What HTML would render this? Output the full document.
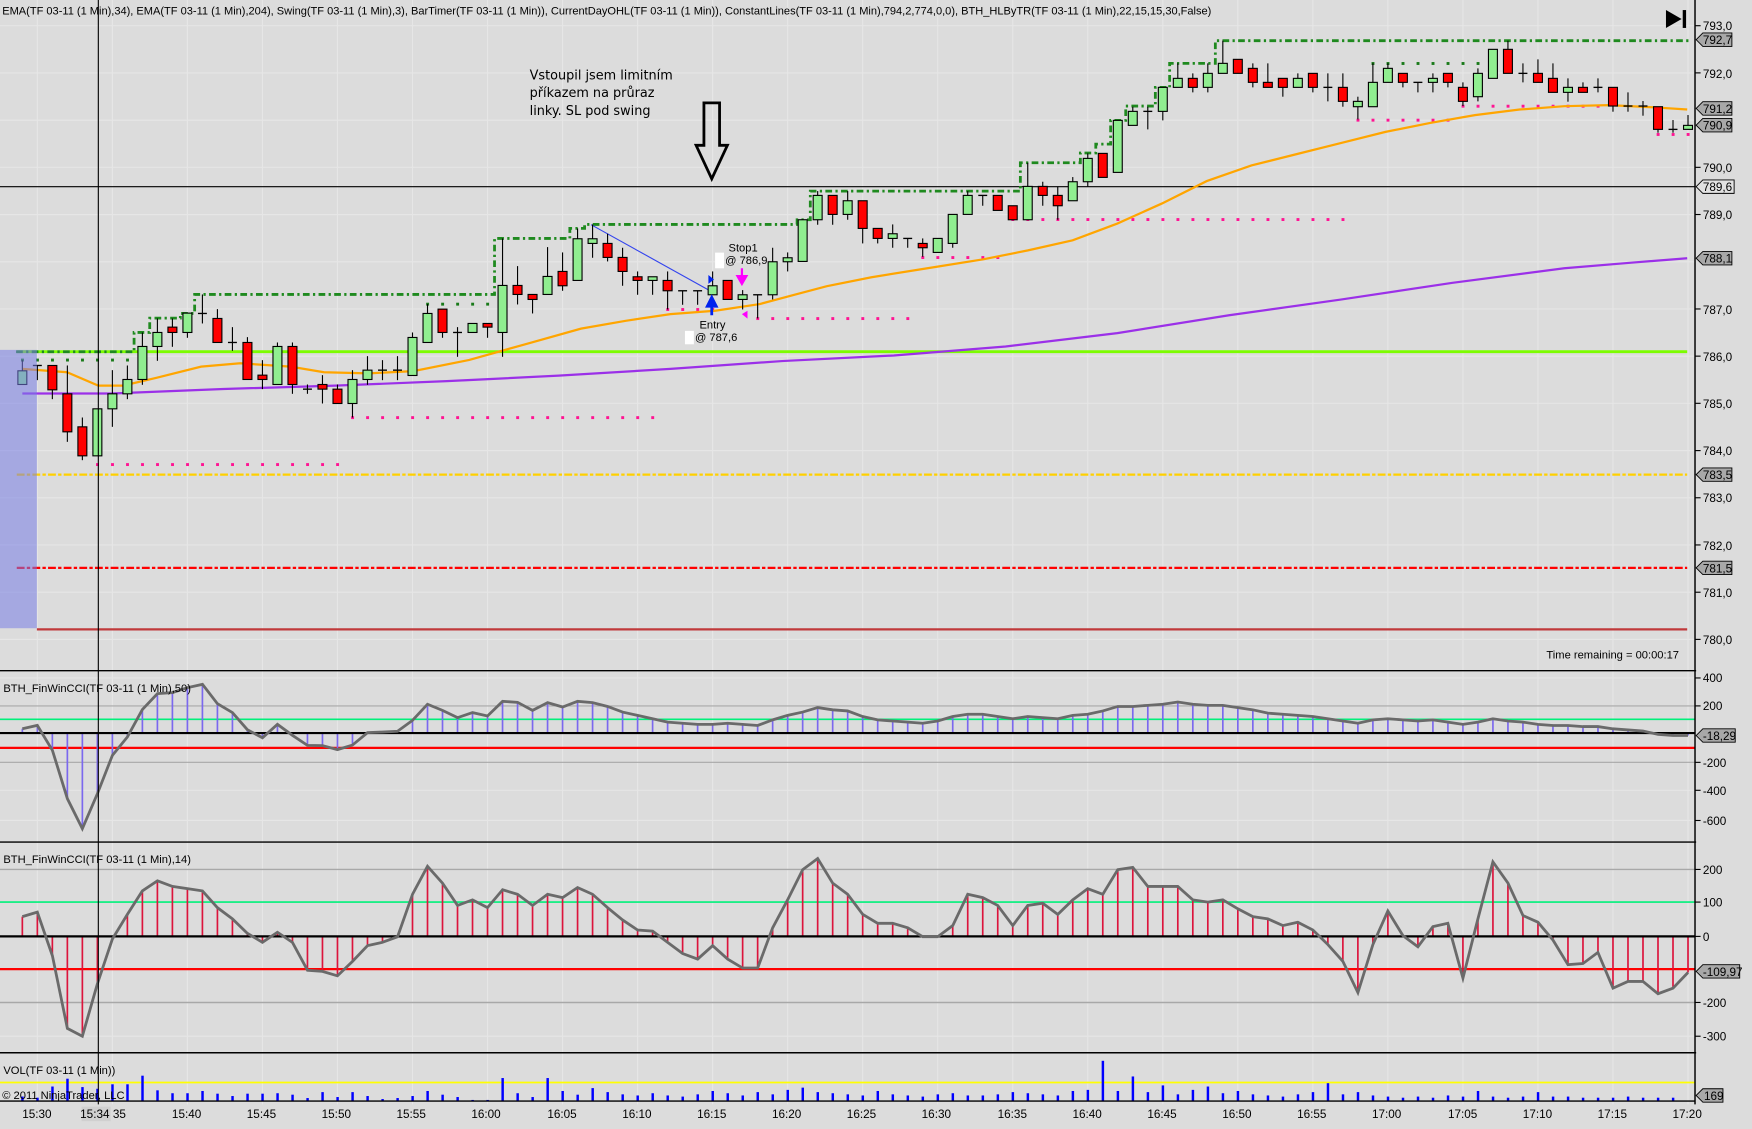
<!DOCTYPE html>
<html><head><meta charset="utf-8">
<style>
html,body{margin:0;padding:0;background:#dcdcdc;overflow:hidden}
svg{display:block}
text{font-family:"Liberation Sans",sans-serif;fill:#000}
</style></head>
<body>
<svg id="s" width="1752" height="1129" viewBox="0 0 1568 1010" preserveAspectRatio="none" xmlns="http://www.w3.org/2000/svg">
<rect x="0" y="0" width="1568" height="1010" fill="#dcdcdc"/>
<g id="grid" stroke="#e6e6e6" stroke-width="1"></g>
<line x1="33" y1="563" x2="1510" y2="563" stroke="#c0393b" stroke-width="2"/>
<line x1="15" y1="508" x2="1510" y2="508" stroke="#ff0000" stroke-width="2" stroke-dasharray="7,2,3,2"/>
<line x1="15" y1="424.6" x2="1510" y2="424.6" stroke="#ffd000" stroke-width="2" stroke-dasharray="7,2,3,2"/>
<line x1="0" y1="167" x2="1517" y2="167" stroke="#000" stroke-width="1"/>
<line x1="15" y1="314.6" x2="1510" y2="314.6" stroke="#7cfc00" stroke-width="2.5"/>
<g id="dots"></g>
<path d="M14.4,314.7 H120 V297.4 H134 V284.6 H161.4 V280.4 H174.2 V263.4 H442.6 V213.3 H510 V204.3 H523.2 V200.8 H713.4 V196.6 H725.2 V171 H913.2 V145.6 H966.9 V136.9 H980.7 V128.9 H994 V107.7 H1007.5 V94.9 H1034 V78.2 H1046.8 V56.7 H1087.7 V36.4 H1512" fill="none" stroke="#1f8a1f" stroke-width="2.5" stroke-dasharray="6,3,2,3"/>
<polyline fill="none" stroke="#9b30e8" stroke-width="2" points="20,352 100,352 200,348 300,345 400,341 500,336 600,330 700,323 800,318 900,310 1000,298 1100,282 1200,268 1300,253 1400,240 1460,235 1510,231"/>
<polyline fill="none" stroke="#ffa500" stroke-width="2" points="20,330 60,333 88,345 110,345 140,338 180,328 215,325 260,328 290,333 330,334 370,332 420,322 470,308 520,294 560,287 600,281 640,278 680,272 710,264 740,256 780,248 830,240 880,232 920,224 960,215 1000,200 1040,182 1080,162 1120,148 1160,138 1200,128 1240,118 1280,110 1320,103 1360,98 1400,95 1440,94 1480,96 1510,98"/>
<line x1="529" y1="201" x2="637" y2="261" stroke="#3344ee" stroke-width="1"/>
<g id="candles"></g>
<rect x="0" y="313" width="33" height="249" fill="rgb(120,125,230)" fill-opacity="0.55"/>
<text x="474" y="71" font-size="11.5" style="font-family:'DejaVu Sans',sans-serif">Vstoupil jsem limitním</text>
<text x="474" y="87" font-size="11.5" style="font-family:'DejaVu Sans',sans-serif">příkazem na průraz</text>
<text x="474" y="103" font-size="11.5" style="font-family:'DejaVu Sans',sans-serif">linky. SL pod swing</text>
<path d="M630,92 H644 V130 H651 L637,160 L623,130 H630 Z" fill="none" stroke="#000" stroke-width="2.5"/>
<rect x="640" y="226" width="8" height="14" fill="#fff"/>
<text x="652" y="225" font-size="10">Stop1</text>
<text x="649" y="236" font-size="10">@ 786,9</text>
<path d="M664,240 V250 M660,247 L664,254 L668,247 Z" stroke="#ff00ff" stroke-width="2" fill="#ff00ff"/>
<path d="M637,282 V272 M633,274 L637,266 L641,274 Z" stroke="#0022ee" stroke-width="2.5" fill="#0022ee"/>
<path d="M634,246 L639,250 L634,254 Z" fill="#0022ee"/>
<path d="M669,278 L664,281 L669,285 Z" fill="#ff00ff"/>
<rect x="613" y="296" width="8" height="12" fill="#fff"/>
<text x="626" y="294" font-size="10">Entry</text>
<text x="622" y="305" font-size="10">@ 787,6</text>
<text x="2" y="13" font-size="9.9">EMA(TF 03-11 (1 Min),34), EMA(TF 03-11 (1 Min),204), Swing(TF 03-11 (1 Min),3), BarTimer(TF 03-11 (1 Min)), CurrentDayOHL(TF 03-11 (1 Min)), ConstantLines(TF 03-11 (1 Min),794,2,774,0,0), BTH_HLByTR(TF 03-11 (1 Min),22,15,15,30,False)</text>
<path d="M1491,9 L1505,17 L1491,25 Z" fill="#000"/><rect x="1506" y="9" width="3" height="16" fill="#000"/>
<text x="1384" y="589" font-size="10">Time remaining = 00:00:17</text>

<line x1="0" y1="600" x2="1568" y2="600" stroke="#000" stroke-width="1.3"/>
<line x1="0" y1="631.5" x2="1517" y2="631.5" stroke="#a8a8a8" stroke-width="1"/>
<line x1="0" y1="682" x2="1517" y2="682" stroke="#a8a8a8" stroke-width="1"/>
<line x1="0" y1="643.5" x2="1517" y2="643.5" stroke="#00f07a" stroke-width="1.5"/>
<line x1="0" y1="669" x2="1517" y2="669" stroke="#ff0000" stroke-width="2"/>
<g id="cci1"></g>
<line x1="0" y1="655.8" x2="1517" y2="655.8" stroke="#000" stroke-width="2"/>
<polyline id="cci1l" fill="none" stroke="#6a6a6a" stroke-width="2.5"/>
<text x="3" y="619" font-size="10">BTH_FinWinCCI(TF 03-11 (1 Min),50)</text>

<line x1="0" y1="753.3" x2="1568" y2="753.3" stroke="#000" stroke-width="1.3"/>
<line x1="0" y1="777.8" x2="1517" y2="777.8" stroke="#a8a8a8" stroke-width="1.3"/>
<line x1="0" y1="896.8" x2="1517" y2="896.8" stroke="#a8a8a8" stroke-width="1.3"/>
<line x1="0" y1="807" x2="1517" y2="807" stroke="#00f07a" stroke-width="1.5"/>
<line x1="0" y1="867" x2="1517" y2="867" stroke="#ff0000" stroke-width="2"/>
<g id="cci2"></g>
<line x1="0" y1="837.7" x2="1517" y2="837.7" stroke="#000" stroke-width="2"/>
<polyline id="cci2l" fill="none" stroke="#6a6a6a" stroke-width="2.5"/>
<text x="3" y="772" font-size="10">BTH_FinWinCCI(TF 03-11 (1 Min),14)</text>

<line x1="0" y1="941.8" x2="1568" y2="941.8" stroke="#000" stroke-width="1.3"/>
<line x1="0" y1="968.4" x2="1517" y2="968.4" stroke="#ffff00" stroke-width="1.5"/>
<g id="vol"></g>
<line x1="0" y1="985" x2="1517" y2="985" stroke="#000" stroke-width="1.3"/>
<text x="3" y="961" font-size="10">VOL(TF 03-11 (1 Min))</text>
<text x="2" y="983" font-size="10">© 2011 NinjaTrader, LLC</text>

<line x1="88" y1="0" x2="88" y2="988" stroke="#000" stroke-width="1"/>

<rect x="1518" y="0" width="50" height="1010" fill="#dcdcdc"/>
<line x1="1517" y1="0" x2="1517" y2="988" stroke="#000" stroke-width="1.3"/>
<g id="ticks" stroke="#000" stroke-width="1"></g>
<g font-size="10.5">
<text x="1524" y="27">793,0</text><text x="1524" y="70">792,0</text><text x="1524" y="154">790,0</text>
<text x="1524" y="196">789,0</text><text x="1524" y="281">787,0</text><text x="1524" y="323">786,0</text>
<text x="1524" y="365">785,0</text><text x="1524" y="407">784,0</text><text x="1524" y="449">783,0</text>
<text x="1524" y="492">782,0</text><text x="1524" y="534">781,0</text><text x="1524" y="576">780,0</text>
<text x="1524" y="610">400</text><text x="1524" y="635">200</text><text x="1524" y="686">-200</text>
<text x="1524" y="711">-400</text><text x="1524" y="738">-600</text>
<text x="1524" y="782">200</text><text x="1524" y="811">100</text><text x="1524" y="842">0</text>
<text x="1524" y="901">-200</text><text x="1524" y="931">-300</text>
</g>
<g font-size="10.5" stroke="#000" stroke-width="0.8">
<path d="M1518,35.5 L1524,29.5 H1550 V41.5 H1524 Z" fill="#a8a8a8"/>
<path d="M1518,97 L1524,91 H1550 V103 H1524 Z" fill="#a8a8a8"/>
<path d="M1518,112 L1524,106 H1550 V118 H1524 Z" fill="#a8a8a8"/>
<path d="M1518,167 L1524,161 H1552 V173 H1524 Z" fill="#e2e2e2"/>
<path d="M1518,231 L1524,225 H1550 V237 H1524 Z" fill="#a8a8a8"/>
<path d="M1518,424.6 L1524,418.6 H1550 V430.6 H1524 Z" fill="#a8a8a8"/>
<path d="M1518,508 L1524,502 H1550 V514 H1524 Z" fill="#a8a8a8"/>
<path d="M1518,658 L1524,652 H1553 V664 H1524 Z" fill="#a8a8a8"/>
<path d="M1518,869 L1524,863 H1557 V875 H1524 Z" fill="#a8a8a8"/>
<path d="M1518,980 L1524,974 H1542 V986 H1524 Z" fill="#a8a8a8"/>
</g>
<g font-size="10.5">
<text x="1524" y="39.5">792,7</text><text x="1524" y="101">791,2</text><text x="1524" y="116">790,9</text>
<text x="1524" y="171">789,6</text><text x="1524" y="235">788,1</text><text x="1524" y="428.6">783,5</text>
<text x="1524" y="512">781,5</text><text x="1524" y="662">-18,29</text><text x="1524" y="873">-109,97</text>
<text x="1525" y="984">169</text>
</g>
<g font-size="10.5" text-anchor="middle">
<text x="33" y="1000">15:30</text>
<rect x="73" y="990" width="26" height="13" fill="#d0d0d0"/>
<text x="98" y="1000" text-anchor="end">15:34</text><text x="101" y="1000" text-anchor="start">35</text>
<text x="167" y="1000">15:40</text><text x="234" y="1000">15:45</text><text x="301" y="1000">15:50</text>
<text x="368" y="1000">15:55</text><text x="435" y="1000">16:00</text><text x="503" y="1000">16:05</text>
<text x="570" y="1000">16:10</text><text x="637" y="1000">16:15</text><text x="704" y="1000">16:20</text>
<text x="771" y="1000">16:25</text><text x="838" y="1000">16:30</text><text x="906" y="1000">16:35</text>
<text x="973" y="1000">16:40</text><text x="1040" y="1000">16:45</text><text x="1107" y="1000">16:50</text>
<text x="1174" y="1000">16:55</text><text x="1241" y="1000">17:00</text><text x="1309" y="1000">17:05</text>
<text x="1376" y="1000">17:10</text><text x="1443" y="1000">17:15</text><text x="1510" y="1000">17:20</text>
</g>
</svg>
<script>
(function(){
var NS="http://www.w3.org/2000/svg";
function el(p,t,a){var e=document.createElementNS(NS,t);for(var k in a)e.setAttribute(k,a[k]);p.appendChild(e);return e;}
function X(i){return 20+13.43*i;}
var g=document.getElementById('grid');
for(var m=1;m<=111;m+=5){el(g,'line',{x1:X(m),y1:0,x2:X(m),y2:988});}
[23,65.2,107.5,149.7,191.9,234.2,276.4,318.6,360.8,403.1,445.3,487.5,529.8,572].forEach(function(y){el(g,'line',{x1:0,y1:y,x2:1517,y2:y});});
[606.5,707,734,927].forEach(function(y){el(g,'line',{x1:0,y1:y,x2:1517,y2:y});});
var ticks=document.getElementById('ticks');
[23,65.2,149.7,191.9,276.4,318.6,360.8,403.1,445.3,487.5,529.8,572,606.5,631.5,682,707,734,777.8,807,837.7,896.8,927].forEach(function(y){el(ticks,'line',{x1:1517,y1:y,x2:1522,y2:y});});
var d=document.getElementById('dots');
function dots(y,a,b,c){for(var i=a;i<=b;i++)el(d,'rect',{x:X(i)-1.2,y:y-1.2,width:2.6,height:2.6,fill:c});}
var G="#1a7a1a",P="#ff1493";
dots(322,0,7,G);dots(272,27,31,G);dots(56.7,90,97,G);
dots(415.5,5,21,P);dots(373.5,22,42,P);dots(276.8,43,46,P);dots(284.9,49,59,P);
dots(230.3,60,65,P);dots(196.3,66,88,P);dots(107.4,89,95,P);dots(94.9,96,105,P);dots(120.2,109,111,P);
var A=[[572,613,540,613,'g'],[556,556,556,600,'d'],[556,629,556,657,'r'],[641,755,556,785,'r'],[740,827,712,840,'r'],[686,827,686,827,'g'],[641,686,570,740,'g'],[598,641,556,657,'g'],[499,598,457,614,'g'],[457,499,415,542,'g'],[441,457,415,500,'r'],[399,457,399,473,'g'],[400,400,343,430,'d'],[415,487,387,487,'r'],[487,487,441,512,'d'],[487,598,471,598,'r'],[585,598,540,627,'r'],[499,613,487,613,'g'],[499,613,487,641,'r'],[627,627,613,641,'d'],[613,627,585,670,'r'],[627,670,613,670,'r'],[598,670,570,712,'g'],[570,598,528,614,'g'],[570,570,540,600,'d'],[570,570,528,600,'d'],[472,586,457,586,'g'],[400,487,372,487,'g'],[387,457,387,473,'r'],[457,457,441,530,'d'],[430,457,430,457,'g'],[430,441,430,473,'r'],[316,457,175,530,'g'],[316,343,258,373,'r'],[343,358,343,400,'r'],[289,343,201,343,'g']];
var B=[[634,677,577,692,'r'],[536,661,505,661,'g'],[536,550,493,593,'g'],[550,592,521,604,'r'],[592,634,563,677,'r'],[650,661,634,704,'r'],[650,661,650,704,'g'],[661,692,634,748,'r'],[692,692,692,734,'d'],[692,692,692,734,'d'],[677,704,634,704,'g'],[661,718,661,718,'r'],[704,718,690,748,'g'],[704,704,704,775,'d'],[605,704,563,718,'g'],[593,605,577,634,'g'],[479,604,479,604,'g'],[406,479,393,494,'g'],[406,463,406,494,'r'],[422,463,393,479,'g'],[422,505,422,550,'r'],[505,535,505,550,'r'],[521,535,493,563,'g'],[535,535,535,563,'d'],[550,563,535,590,'r'],[535,577,535,577,'g'],[463,550,463,563,'g'],[406,463,393,463,'g'],[406,406,406,437,'d'],[406,451,406,451,'r'],[437,479,437,479,'r'],[379,479,308,479,'g'],[379,406,365,437,'r'],[406,437,379,479,'r'],[365,422,351,422,'g'],[295,365,280,379,'g']];
var C=[[400,472,400,472,'r'],[301,457,301,457,'g'],[274,316,260,316,'g'],[274,274,260,328,'d'],[202,274,202,301,'g'],[175,202,130,202,'g'],[175,202,160,217,'r'],[160,202,130,217,'g'],[130,160,62,160,'g'],[118,160,118,160,'r'],[145,187,130,202,'r'],[187,202,130,202,'r'],[175,202,175,230,'r'],[175,202,160,202,'g'],[160,202,160,217,'r'],[202,202,160,244,'d'],[202,244,160,260,'r'],[244,260,230,298,'g'],[187,260,130,260,'g'],[145,187,130,187,'g'],[160,187,160,202,'r'],[187,187,187,217,'d'],[175,187,160,217,'g'],[160,187,160,202,'r'],[202,244,187,258,'r'],[160,230,145,244,'g'],[88,175,88,175,'g'],[88,160,62,160,'r'],[160,160,130,187,'d'],[160,187,118,187,'r'],[175,217,130,217,'r']];
var D=[[262,277,235,305,'g'],[262,277,247,277,'r'],[262,262,235,277,'d'],[262,318,262,335,'r'],[318,318,277,335,'d'],[318,318,303,347,'d'],[320,388,320,398,'r'],[388,388,360,398,'d'],[376,388,345,388,'g']];
var cg=document.getElementById('candles');
function draw(arr,start,off){arr.forEach(function(c,k){var i=start+k,x=X(i),f=function(v){return off+0.2983*v;};
var t=f(c[0]),b=f(c[1]),h=f(c[2]),l=f(c[3]);
el(cg,'line',{x1:x,y1:h,x2:x,y2:l,stroke:'#000','stroke-width':1});
if(c[4]=='d'){el(cg,'line',{x1:x-4,y1:t,x2:x+4,y2:t,stroke:'#000','stroke-width':1.2});}
else{el(cg,'rect',{x:x-4,y:t,width:8,height:Math.max(b-t,1.5),fill:c[4]=='g'?'#90ee90':'#ff0000',stroke:'#000','stroke-width':1});}
});}
draw(A,0,161.1);draw(B,36,53.7);draw(C,72,17.9);draw(D,103,0);
var c1=[651.9,648.9,671.2,714.5,741.3,710,675.7,659.3,634.8,620.5,619.6,615.2,612.2,629.5,637.5,652.8,660,648,657.8,666.8,667,670.6,666.5,655.4,654.9,654.2,644.4,630,635.5,642,637.5,640.5,627.4,628.3,635.5,628.6,632.5,627.4,628.6,632,637,640,643,646,647,648,648,647,648,649,644,640,637,633,635,636,641,644,645,646,647,645,641,639,639,641,643,641,642,643,640,639,636,632,632,631,630,628,630,631,631,633,635,638,639,640,641,643,645,647,644,643,644,645,644,646,648,646,643,645,646,648,649,649,650,650,652,653,654,657,658,658];
var c2=[820,816,855,920,927,880,840,818,797,788,793,795,797,812,822,835,843,834,843,868,869,873,860,846,843,838,800,775,790,810,805,812,796,800,810,800,803,794,800,812,823,832,833,843,853,858,846,858,866,866,830,805,778,768,790,800,818,826,826,830,838,838,828,800,803,810,828,810,808,818,805,795,800,778,776,793,793,793,805,807,805,813,820,822,828,825,832,845,860,888,845,815,837,847,829,826,875,822,771,790,819,825,841,863,862,852,884,878,878,889,884,870];
function osc(vals,gid,lid,zero,col){var gg=document.getElementById(gid),pts=[];vals.forEach(function(v,i){var x=X(i);el(gg,'line',{x1:x,y1:zero,x2:x,y2:v,stroke:col,'stroke-width':1.5});pts.push(x.toFixed(1)+','+v);});document.getElementById(lid).setAttribute('points',pts.join(' '));}
osc(c1,'cci1','cci1l',655.8,'#7b68ee');osc(c2,'cci2','cci2l',837.7,'#dc143c');
var vh=[4,3,13,20,12.5,11,15,15,22.7,9.6,7,7,9,6.6,4.5,6.6,6.6,7,5.7,2.7,8,3.6,8,4.5,1.8,2.7,4.5,9,5.7,3.6,1,1,20.6,7,3.6,20.6,9,5.7,11.6,8,6,5,7,5,4,6,9,7,5,8,6,10,12,8,7,6,5,9,6,5,4,6,7,5,5,6,8,7,6,5,9,10,36,9,22,8,14,6,10,13,7,9,6,5,4,6,8,16,6,8,5,4,3,4,3,5,4,9,4,3,4,8,4,4,3,3,3,4,3,3,3];
var vg=document.getElementById('vol');
vh.forEach(function(h,i){var x=X(i);el(vg,'rect',{x:x-1,y:985-h,width:2.2,height:h,fill:'#0000ff'});});
})();
</script>
</body></html>
